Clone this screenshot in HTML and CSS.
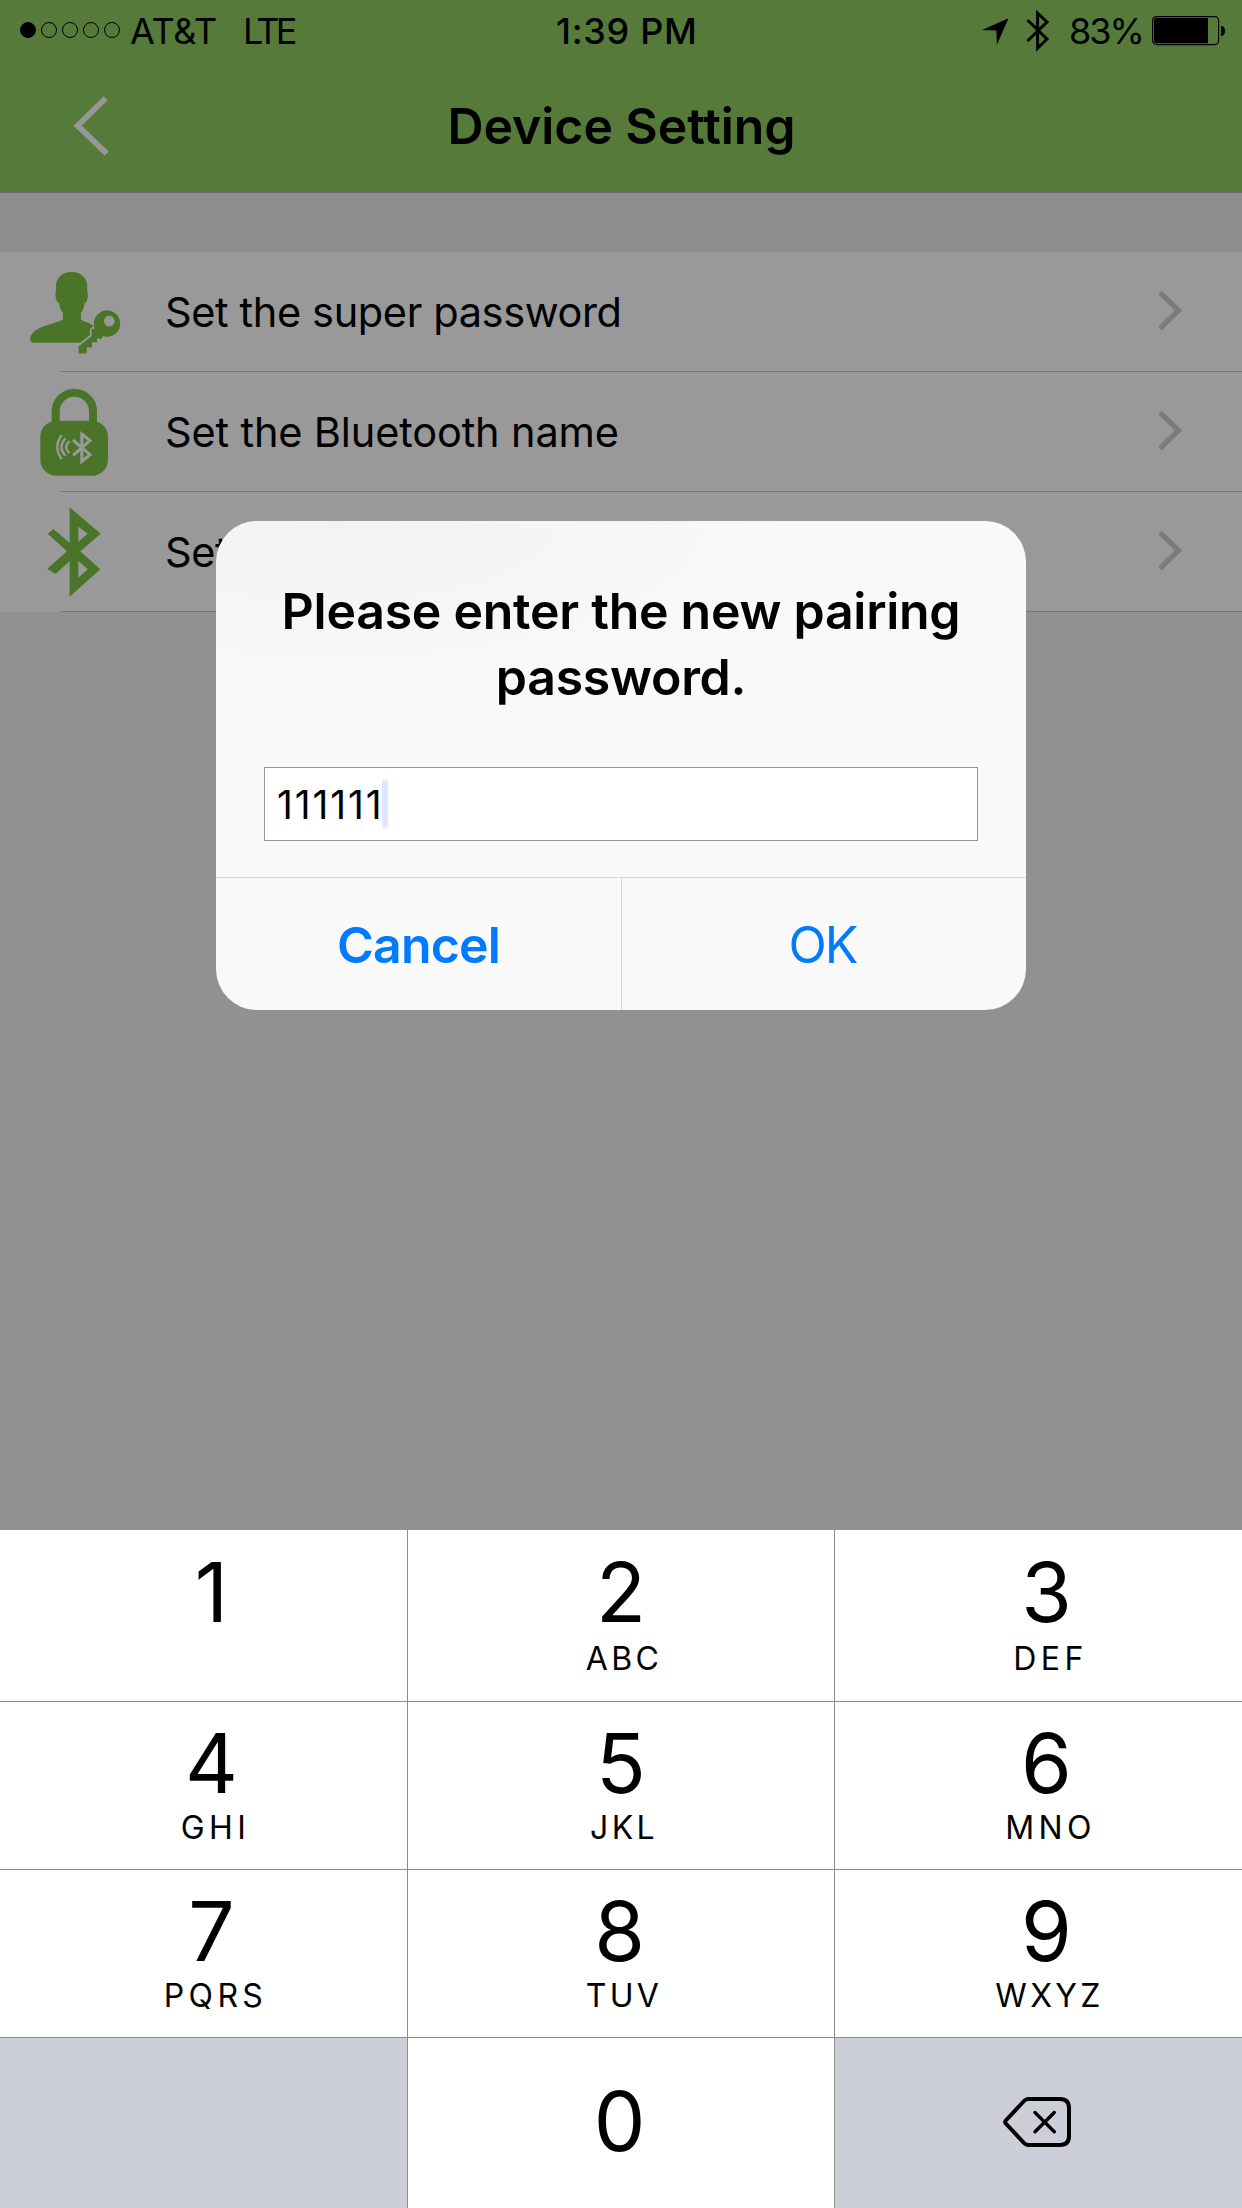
FILE: index.html
```html
<!DOCTYPE html>
<html lang="en">
<head>
<meta charset="utf-8">
<title>Device Setting</title>
<link rel="stylesheet" href="styles.css">
</head>
<body>
<div class="screen">
  <header class="header">
    <div class="status">
      <div class="status-left">
        <span class="dots"><i class="dot dot-on"></i><i class="dot"></i><i class="dot"></i><i class="dot"></i><i class="dot"></i></span>
        <span class="carrier">AT&amp;T</span>
        <span class="network">LTE</span>
      </div>
      <span class="time">1:39 PM</span>
      <div class="status-right">
        <svg class="location" width="27" height="27" viewBox="0 0 27 27"><path d="M0 12L26.5 0.3L14.9 26.8L14.4 12.4Z"/></svg>
        <svg class="bluetooth" width="24" height="42" viewBox="0 0 24 42"><path d="M1.5 10L21 29L11.6 38.2V3.2L21 12L1.5 31" fill="none" stroke="#000" stroke-width="3"/></svg>
        <span class="percent">83%</span>
        <svg class="battery" width="74" height="30" viewBox="0 0 74 30"><rect x=".6" y=".6" width="66" height="28" rx="4" fill="none" stroke="#000" stroke-width="1.2"/><rect x="2" y="2" width="54" height="25.2" rx="2.4"/><rect x="54" y="2" width="2" height="25.2"/><path d="M69 10h1q3 1 3 5t-3 5h-1z"/></svg>
      </div>
    </div>
    <nav class="navbar">
      <svg class="back" width="36" height="64" viewBox="0 0 36 64"><path d="M32.7 4.2L4.6 31.7L33.7 59.7" fill="none" stroke="#979797" stroke-width="5.8"/></svg>
      <h1 class="title">Device Setting</h1>
    </nav>
  </header>

  <ul class="list">
    <li class="row">
      <svg class="row-icon" width="128" height="119" viewBox="0 0 128 119">
        <path d="M71.7 20C62 20 56 26 56 34V40C55 41 55.3 46 57.3 50L59 51C59.500 55 61 58.500 63 61V67.500C52 73 31 75 30 87Q30 90.700 34 90.700H80L90 83V77L93.500 74C90 71 85 70 81 67.500V61C83 58.500 84 55 84.600 51L86.500 50C88.200 46 88.200 41 87.200 40V34C87.200 26 81 20 71.700 20Z"/>
        <path fill-rule="evenodd" d="M94.800 76.500A13.200 13.200 0 1 1 102.700 84L102 86.700H97V90.300H92V95.500H86.700V101.500H78.600V94.500L91.700 84V77ZM109.300 63.800a5.300 5.300 0 1 0 .01 0Z"/>
      </svg>
      <span class="label">Set the super password</span>
      <svg class="chevron" width="87" height="119" viewBox="0 0 87 119"><path d="M5 40.500L23.500 58.400L5 76.300"/></svg>
    </li>
    <li class="row">
      <svg class="row-icon" width="128" height="119" viewBox="0 0 128 119">
        <path class="line" stroke-width="8" d="M55.700 52V39.300a18.650 18.650 0 0 1 37.300 0V52"/>
        <rect x="40.300" y="48.700" width="67.700" height="55" rx="16"/>
        <g class="cutout">
          <path stroke-width="3" d="M73 68L90 82.700L81.800 89.500V62L90 68.500L73 83.300"/>
          <path stroke-width="2.300" d="M61.700 63.200Q52.800 75 61.700 87M65.500 66.200Q57.300 75 65.500 84M69.600 69Q62.600 75 69.600 81"/>
        </g>
      </svg>
      <span class="label label-wide">Set the Bluetooth name</span>
      <svg class="chevron" width="87" height="119" viewBox="0 0 87 119"><path d="M5 40.500L23.500 58.400L5 76.300"/></svg>
    </li>
    <li class="row">
      <svg class="row-icon" width="128" height="119" viewBox="0 0 128 119">
        <path fill-rule="evenodd" d="M69.700 15.300L100.700 41.700L80.300 59.300L100.300 77.300L69.700 104.700V69.300L55.300 82L47.300 76.700L67 59.300L47.700 41.700L53.300 37L69.700 50.700ZM78.300 34.700V49.700L87.700 41.700ZM78.300 69V85.700L87.700 77.300Z"/>
      </svg>
      <span class="label">Set the pairing password</span>
      <svg class="chevron" width="87" height="119" viewBox="0 0 87 119"><path d="M5 40.500L23.500 58.400L5 76.300"/></svg>
    </li>
  </ul>

  <div class="keypad">
    <div class="key"><b>1</b></div>
    <div class="key"><b>2</b><span class="snug">ABC</span></div>
    <div class="key"><b>3</b><span>DEF</span></div>
    <div class="key"><b>4</b><span>GHI</span></div>
    <div class="key"><b>5</b><span class="snug">JKL</span></div>
    <div class="key"><b>6</b><span>MNO</span></div>
    <div class="key"><b>7</b><span>PQRS</span></div>
    <div class="key"><b class="left">8</b><span class="snug">TUV</span></div>
    <div class="key"><b>9</b><span class="snug">WXYZ</span></div>
    <div class="key key-gray"></div>
    <div class="key"><b class="left">0</b></div>
    <div class="key key-gray key-delete">
      <svg width="68" height="50" viewBox="0 0 68 50" fill="none" stroke="#000" stroke-linecap="round" stroke-linejoin="round"><path stroke-width="4" d="M21.500 3.500Q23.500 2 25.500 2H57Q66 2 66 11V39Q66 48 57 48H25.500Q23.500 48 21.500 46.500L2.800 26.500Q1.500 25 2.800 23.500Z"/><path stroke-width="3.400" d="M32 15.500L51.300 34.700M51.300 15.500L32 34.700"/></svg>
    </div>
  </div>

  <div class="dialog" role="dialog">
    <div class="dialog-body">
      <h2 class="dialog-title">Please enter the new pairing password.</h2>
      <div class="field"><span class="value">111111</span><i class="caret"></i></div>
    </div>
    <div class="actions">
      <button class="action action-cancel">Cancel</button>
      <button class="action action-ok">OK</button>
    </div>
  </div>
</div>
</body>
</html>
```
FILE: styles.css
```css
* { box-sizing: border-box; }

body {
  margin: 0;
  font-family: Inter, "Liberation Sans", sans-serif;
  color: #000;
}

svg { display: block; flex: none; }

.screen {
  position: relative;
  display: flex;
  flex-direction: column;
  width: 1242px;
  height: 2208px;
  overflow: hidden;
  background: #91918f;
}

/* Header */
.header {
  height: 193px;
  background: #567a39;
  border-bottom: 1px solid #6b6b6b;
}

.status {
  display: grid;
  grid-template-columns: 556px 1fr auto;
  height: 60px;
  padding-right: 16px;
  font-size: 36px;
  line-height: 62px;
  white-space: nowrap;
}

.status-left, .status-right { display: flex; }
.status-left { padding-left: 20px; }

.dots { display: flex; gap: 5px; padding-top: 22px; }
.dot { width: 16px; height: 16px; border: 1px solid #000; border-radius: 50%; }
.dot-on { background: #000; }

.carrier { margin-left: 10px; letter-spacing: -.3px; }
.network { margin-left: 26px; letter-spacing: -3.7px; }
.time { font-weight: 500; letter-spacing: .7px; }

.location { margin-top: 18px; }
.bluetooth { margin: 10px 0 0 17px; }
.percent { width: 74px; margin-left: 19px; letter-spacing: -2px; }
.battery { margin: 16px 0 0 9px; }

.navbar {
  display: grid;
  grid-template-columns: 150px 1fr 150px;
  align-items: center;
  height: 132px;
}

.back { margin-left: 73px; }

.title {
  margin: 0;
  padding-left: 1px;
  font-size: 50px;
  font-weight: 600;
  line-height: 60px;
  letter-spacing: -.1px;
  text-align: center;
}

/* Settings list */
.list {
  margin: 0;
  padding: 59px 0 0;
  list-style: none;
  background: #8e8e8e;
}

.row {
  display: flex;
  height: 120px;
  background: linear-gradient(#777, #777) 60px 100% / 100% 1px no-repeat #999;
}

.row-icon { fill: #4a7528; }
.row-icon .line { fill: none; stroke: #4a7528; }
.row-icon .cutout { fill: none; stroke: #999; }

.label {
  flex: 1;
  padding-left: 37px;
  font-size: 41.5px;
  line-height: 121px;
  letter-spacing: -.37px;
}
.label-wide { letter-spacing: -.15px; }

.chevron { fill: none; stroke: #7a7b7d; stroke-width: 5.2; }

/* Number pad */
.keypad {
  display: grid;
  grid-template-columns: 408px 427px 407px;
  grid-template-rows: 172px 168px 168px 170px;
  margin-top: auto;
}

.key {
  display: flex;
  flex-direction: column;
  align-items: center;
  padding-top: 18px;
  background: #fff;
  border-right: 1px solid #8c8c8e;
  border-bottom: 1px solid #8c8c8e;
}

.key:nth-child(3n) { border-right: 0; }
.key:nth-child(3n), .key:nth-child(3n + 1) { padding-left: 16px; }
.key:nth-child(-n + 3) { padding-top: 19px; }
.key:nth-child(n + 10) { padding-top: 40px; border-bottom: 0; }

.key b { font-size: 82px; font-weight: 400; line-height: 88px; }
.key .left { padding-right: 3px; }

.key span {
  padding-left: 8px;
  font-size: 32px;
  line-height: 40px;
  letter-spacing: 4.4px;
}
.key .snug { padding-left: 6px; letter-spacing: 3.3px; }
.key:nth-child(-n + 3) span { margin-top: 2px; }

.key-gray { background: #cccfd8; }
.key.key-delete { justify-content: center; padding: 0 3px 2px 0; }

/* Alert */
.dialog {
  position: absolute;
  top: 521px;
  left: 216px;
  width: 810px;
  height: 489px;
  overflow: hidden;
  border-radius: 41px;
  background: radial-gradient(ellipse 460px 170px at 120px 0, #f2f2f2, #f9f9f9) #f9f9f9;
}

.dialog-body { height: 356px; padding: 57px 48px 0; }

.dialog-title {
  margin: 0 0 57px;
  font-size: 50px;
  font-weight: 600;
  line-height: 66px;
  letter-spacing: -.27px;
  text-align: center;
}

.field {
  display: flex;
  align-items: center;
  height: 74px;
  padding-left: 12px;
  background: #fff;
  border: 1px solid #979797;
}

.value { padding-top: 1px; font-size: 39px; line-height: 72px; letter-spacing: 1.9px; }
.caret { width: 6px; height: 48px; margin-left: -2px; border-radius: 3px; background: #e0e6fd; }

.actions {
  display: grid;
  grid-template-columns: 406px 404px;
  height: 133px;
  border-top: 1px solid #d8d8da;
}

.action {
  padding: 1px 0 0;
  border: 0;
  background: none;
  color: #007aff;
  font-family: inherit;
  font-size: 50px;
}
.action-cancel { border-right: 1px solid #d8d8da; font-weight: 600; letter-spacing: -.85px; }
.action-ok { padding-right: 3px; letter-spacing: -1.8px; }
```
